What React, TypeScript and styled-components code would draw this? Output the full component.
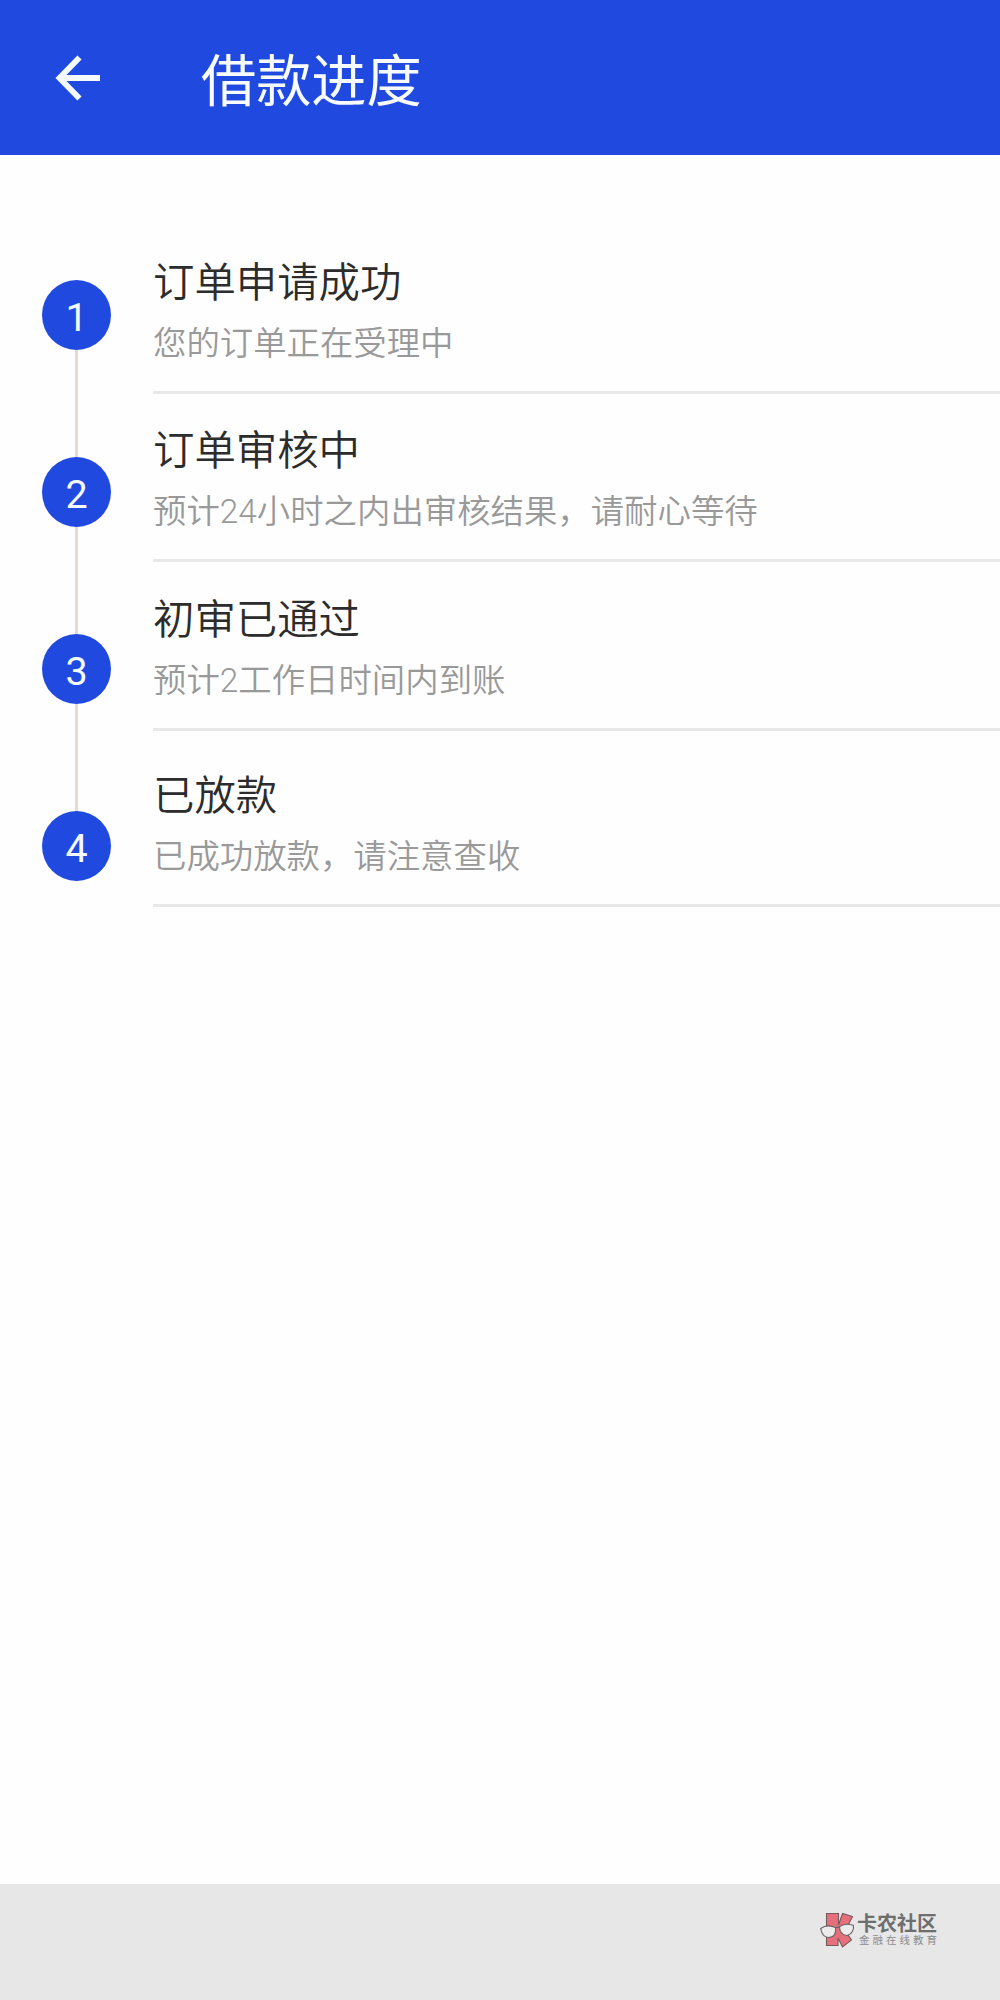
import React from 'react';
import styled, { createGlobalStyle } from 'styled-components';

const Global = createGlobalStyle`
  * { box-sizing: border-box; }
  body { margin: 0; background: #fefefe; font-family: Roboto, "Noto Sans CJK SC", sans-serif; }
`;

const Page = styled.div`
  display: flex;
  flex-direction: column;
  width: 1000px;
  height: 2000px;
  background: #fefefe;
`;

const Header = styled.header`
  display: flex;
  align-items: center;
  height: 155px;
  padding-left: 55px;
  background: #204adf;
  color: #f8fcff;
`;

const Title = styled.h1`
  margin: 8px 0 0 100px;
  font-size: 55.2px;
  line-height: 80px;
  font-weight: 400;
`;

const Main = styled.main`
  display: flex;
  flex: 1;
`;

const Rail = styled.div`
  display: flex;
  flex-direction: column;
  align-items: center;
  width: 153px;
  padding-top: 125px;
`;

const Dot = styled.div`
  display: flex;
  align-items: center;
  justify-content: center;
  width: 69px;
  height: 70px;
  padding-top: 5px;
  border-radius: 50%;
  background: #204adf;
  color: #f4faff;
  font-size: 39.5px;
  line-height: 44px;
  font-weight: 400;
`;

const Connector = styled.div`
  width: 3px;
  height: 107px;
  background: #ead9cb;
`;

const Steps = styled.div`
  flex: 1;
  padding-top: 70px;
`;

const Step = styled.section<{ $tall?: boolean }>`
  display: flex;
  flex-direction: column;
  justify-content: flex-end;
  height: ${(p) => (p.$tall ? 176 : 168.5)}px;
  padding-bottom: 22px;
  border-bottom: 3px solid #e8e8e8;
`;

const StepTitle = styled.h2`
  margin: 0;
  font-size: 41.4px;
  line-height: 60px;
  font-weight: 350;
  color: #2c2c2c;
`;

const StepNote = styled.p`
  margin: 6px 0 0;
  font-size: 33.4px;
  line-height: 50px;
  font-weight: 350;
  color: #999;
`;

const Footer = styled.footer`
  display: flex;
  align-items: flex-start;
  height: 116px;
  padding: 28px 0 0 820px;
  background: #e7e7e7;
`;

const Brand = styled.div`
  padding-left: 2px;
`;

const BrandName = styled.div`
  font-size: 20px;
  line-height: 24px;
  font-weight: 700;
  color: #6e6e6e;
`;

const BrandTag = styled.div`
  padding-left: 2px;
  font-size: 10.5px;
  line-height: 10px;
  letter-spacing: 3px;
  color: #8c8c8c;
`;

const steps = [
  { title: '订单申请成功', note: '您的订单正在受理中' },
  { title: '订单审核中', note: '预计24小时之内出审核结果，请耐心等待' },
  { title: '初审已通过', note: '预计2工作日时间内到账' },
  { title: '已放款', note: '已成功放款，请注意查收' },
];

const BackIcon = () => (
  <svg width="46" height="46" viewBox="0 0 46 46" fill="none" stroke="#f4faff" strokeWidth="5.8">
    <path d="M24.500 2.500L4.500 23L24.500 43.500M4.500 23H45" />
  </svg>
);

const BrandMark = () => (
  <svg width="35" height="36" viewBox="0 0 35 36" stroke="#6b6163" strokeWidth="1.1">
    <path d="M6.500 1.500H18.500V13L22.500 1.500L32.500 4.500L25 19L31.500 28L22.500 35L18 26V33.500H6.500Z" fill="#e5707b" stroke="#75595c" />
    <path d="M0.700 16.500C5 13.500 11 13.500 15.500 15.500C16.500 21 14 25.500 9 25.500C4 25.500 1.500 21 0.700 16.500Z" fill="#ececec" />
    <path d="M19.500 14.500C24 12 29 11.500 33.500 13.500C34 18 31.500 23 26.500 23.500C22 23.500 19.500 19 19.500 14.500Z" fill="#ececec" />
    <path d="M15.500 16Q17.500 14.500 19.500 15.500" fill="none" />
  </svg>
);

export default function App() {
  return (
    <Page>
      <Global />
      <Header>
        <BackIcon />
        <Title>借款进度</Title>
      </Header>
      <Main>
        <Rail>
          {steps.map((s, i) => (
            <React.Fragment key={s.title}>
              {i > 0 && <Connector />}
              <Dot>{i + 1}</Dot>
            </React.Fragment>
          ))}
        </Rail>
        <Steps>
          {steps.map((s, i) => (
            <Step key={s.title} $tall={i === 3}>
              <StepTitle>{s.title}</StepTitle>
              <StepNote>{s.note}</StepNote>
            </Step>
          ))}
        </Steps>
      </Main>
      <Footer>
        <BrandMark />
        <Brand>
          <BrandName>卡农社区</BrandName>
          <BrandTag>金融在线教育</BrandTag>
        </Brand>
      </Footer>
    </Page>
  );
}
